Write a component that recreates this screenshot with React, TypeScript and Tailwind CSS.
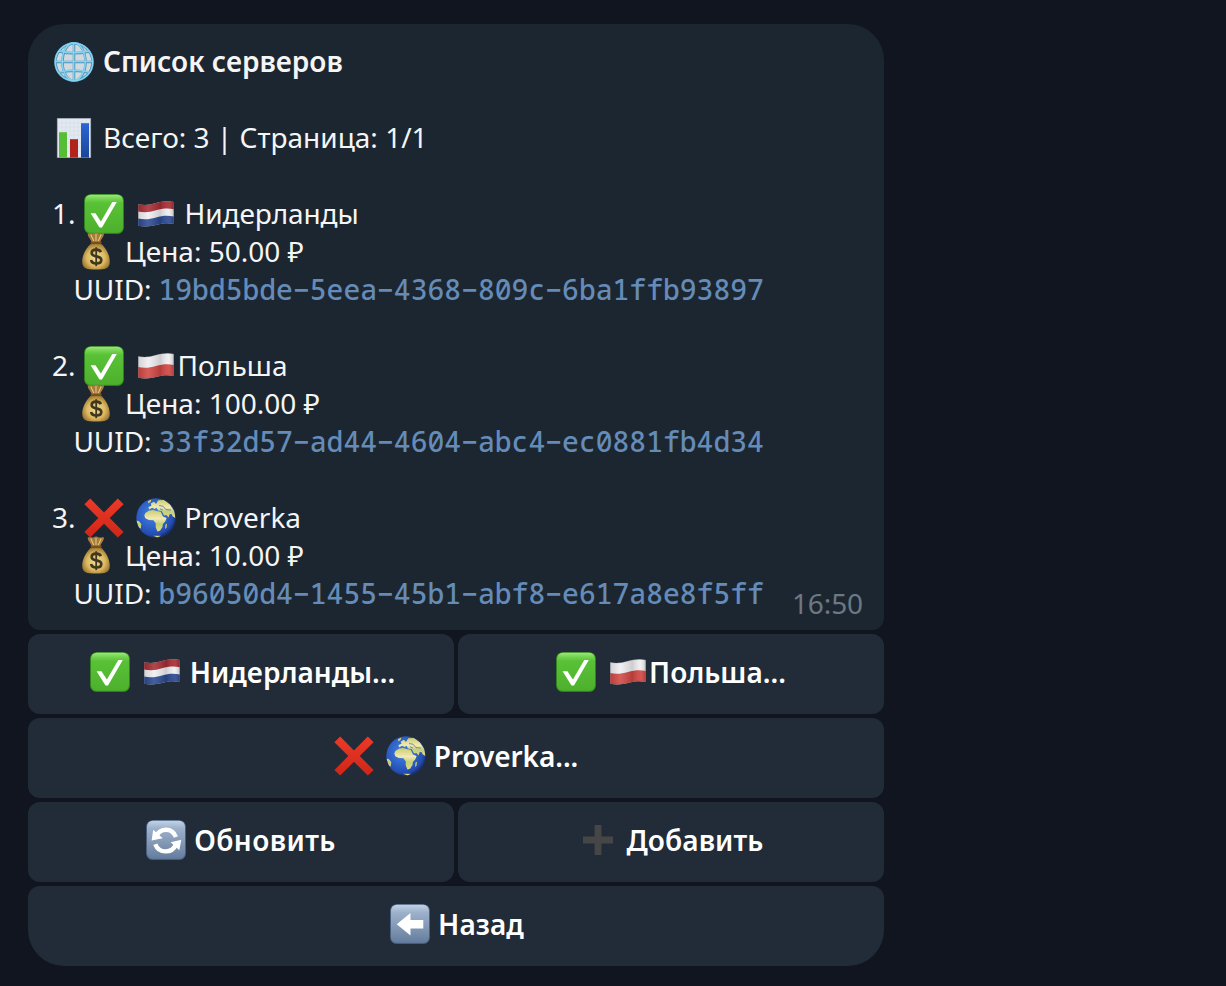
import React, { type ReactNode } from "react";

type IconProps = { className?: string };

function Svg({ className = "", children }: { className?: string; children: ReactNode }) {
  return (
    <svg viewBox="0 0 40 40" className={`h-10 w-10 shrink-0 ${className}`} aria-hidden="true">
      {children}
    </svg>
  );
}

function Gradients() {
  return (
    <svg className="absolute h-0 w-0" aria-hidden="true">
      <defs>
        <linearGradient id="green" x1="0" y1="0" x2="0" y2="1">
          <stop offset="0" stopColor="#a0e57c" />
          <stop offset=".12" stopColor="#6fd14c" />
          <stop offset=".22" stopColor="#58c136" />
          <stop offset="1" stopColor="#4eb02d" />
        </linearGradient>
        <linearGradient id="steel" x1="0" y1="0" x2="0" y2="1">
          <stop offset="0" stopColor="#c3d3e5" />
          <stop offset=".2" stopColor="#9db1cb" />
          <stop offset="1" stopColor="#657d9d" />
        </linearGradient>
        <linearGradient id="cross" x1="0" y1="0" x2="0" y2="1">
          <stop offset="0" stopColor="#ec3a27" />
          <stop offset="1" stopColor="#cf2618" />
        </linearGradient>
        <radialGradient id="ocean" cx=".42" cy=".4" r=".6">
          <stop offset="0" stopColor="#4685dd" />
          <stop offset=".6" stopColor="#2d5fc6" />
          <stop offset=".88" stopColor="#234bae" />
          <stop offset="1" stopColor="#1b3174" />
        </radialGradient>
        <linearGradient id="land" x1="0" y1="0" x2="0" y2="1">
          <stop offset="0" stopColor="#c9cd6c" />
          <stop offset=".4" stopColor="#f2e9b4" />
          <stop offset=".65" stopColor="#c4cf76" />
          <stop offset="1" stopColor="#e3d885" />
        </linearGradient>
        <radialGradient id="bag" cx=".5" cy=".55" r=".6">
          <stop offset="0" stopColor="#f3dc94" />
          <stop offset=".55" stopColor="#dcb961" />
          <stop offset="1" stopColor="#8b6322" />
        </radialGradient>
        <linearGradient id="wave" x1="0" y1="0" x2="1" y2="0">
          <stop offset="0" stopColor="#000" stopOpacity=".12" />
          <stop offset=".28" stopColor="#fff" stopOpacity=".12" />
          <stop offset=".62" stopColor="#000" stopOpacity=".14" />
          <stop offset=".85" stopColor="#fff" stopOpacity=".08" />
          <stop offset="1" stopColor="#000" stopOpacity=".2" />
        </linearGradient>
        <linearGradient id="barBlue" x1="0" y1="0" x2="0" y2="1">
          <stop offset="0" stopColor="#2a66d4" />
          <stop offset="1" stopColor="#1a4499" />
        </linearGradient>
        <clipPath id="globeClip"><circle cx="20" cy="20" r="19.7" /></clipPath>
      </defs>
    </svg>
  );
}

function Globe({ className }: IconProps) {
  return (
    <Svg className={className}>
      <circle cx="20" cy="20" r="19" fill="#d3d8de" />
      <g fill="none" stroke="#4f95b8" strokeWidth="2.5">
        <path d="M20 1v38M1 20h38M5.2 9.5Q20 13.2 34.8 9.5M5.2 30.5Q20 27 34.8 30.5" />
        <ellipse cx="20" cy="20" rx="11.5" ry="19" />
        <circle cx="20" cy="20" r="18.5" />
      </g>
      <g fill="none" stroke="#84d3f1" strokeWidth="1.5">
        <path d="M19.6 1v38M1 19.5h38M5.2 9Q20 12.7 34.8 9M5.2 30Q20 26.5 34.8 30" />
        <ellipse cx="19.7" cy="19.7" rx="11.5" ry="18.8" />
        <circle cx="20" cy="20" r="18.8" />
      </g>
    </Svg>
  );
}

function Chart({ className }: IconProps) {
  return (
    <Svg className={className}>
      <path fill="#e3e9f1" stroke="#aeb7c1" strokeWidth=".8" d="M3.4.4h33.2v39.2H3.4z" />
      <path stroke="#d3dbe5" strokeWidth=".5" d="M4 5h32M4 9h32M4 13h32M4 17h32M4 21h32M4 25h32M4 29h32M4 33h32M8 1v38M12 1v38M16 1v38M20 1v38M24 1v38M28 1v38M32 1v38" />
      <path fill="#56bd37" d="M5 14.2h8v25.4H5z" />
      <path fill="#b1241b" d="M16 21.2h8v18.4h-8z" />
      <path fill="url(#barBlue)" d="M27 5.2h8v34.4h-8z" />
    </Svg>
  );
}

function Check({ className }: IconProps) {
  return (
    <Svg className={className}>
      <rect x=".2" y=".2" width="39.6" height="39.6" rx="6.4" fill="#369a1b" />
      <rect x="1" y=".8" width="38" height="38" rx="5.8" fill="url(#green)" />
      <path fill="#fff" d="M6.6 19.2h4.9l5.4 8.4L28.3 8h4.5L18 33.4h-2.5z" />
    </Svg>
  );
}

function Cross({ className }: IconProps) {
  return (
    <Svg className={className}>
      <path fill="url(#cross)" d="M6.2.6 20 14.5 33.8.6l5.8 5.6L25.7 20.1 39.6 34l-5.8 5.6L20 25.8 6.2 39.6.4 34l13.9-13.9L.4 6.2z" />
    </Svg>
  );
}

const FLAG_SHAPE = "M2.2 10.2C8 11.7 14 10.9 20 9 26 7.2 32 6.5 37.8 7.9V29.9C32 28.5 26 29.1 20 31 14 32.7 8 33 2.2 31.7z";

function Flag({ country, className }: IconProps & { country: "nl" | "pl" }) {
  return (
    <Svg className={className}>
      <path fill="#efeff2" d={FLAG_SHAPE} />
      {country === "nl" ? (
        <>
          <path fill="#a82d35" d="M2.2 10.2C8 11.7 14 10.9 20 9 26 7.2 32 6.5 37.8 7.9V15.3C32 13.9 26 14.5 20 16.3 14 18.2 8 18.8 2.2 17.4z" />
          <path fill="#2c4a92" d="M2.2 24.5C8 26 14 25.3 20 23.5 26 21.7 32 21.2 37.8 22.6V29.9C32 28.5 26 29.1 20 31 14 32.7 8 33 2.2 31.7z" />
        </>
      ) : (
        <path fill="#d14743" d="M2.2 21C8 22.5 14 21.8 20 20 26 18.1 32 17.5 37.8 18.9V29.9C32 28.5 26 29.1 20 31 14 32.7 8 33 2.2 31.7z" />
      )}
      <path fill="url(#wave)" stroke="#34343c" strokeOpacity=".3" strokeWidth=".6" d={FLAG_SHAPE} />
    </Svg>
  );
}

function Earth({ className }: IconProps) {
  return (
    <Svg className={className}>
      <circle cx="20" cy="20" r="19.7" fill="url(#ocean)" />
      <g clipPath="url(#globeClip)" fill="url(#land)">
        <path d="M9.4 15 12.8 12.8 17 12 20.3 13.1 24.7 13.7 27 18.5 30.7 20.1 29.2 23.4 26.9 26.1 26.5 29 24 32.8 21.4 33.4 19.7 29.2 19.7 25.2 17.4 22.2 12.8 22.1 9.3 20.2 8.3 17.6z" />
        <path d="M13 11.4 12.5 9 15.5 7.8 14.7 5.4 18 3.8 20 5.9 22.2 2.3 28 1.9 34 6.5 38.3 13 39.4 20 36.8 18.4 35.4 15.9 33.6 16.2 32.5 19.5 30.4 16.9 28.2 17.5 25.6 13 22 12.6 20.6 9.8 18.6 11 16.2 9.8z" />
        <path d="M.4 22.6 3 23.3 5.3 26 4.8 30.5 2.7 29.4zM29.5 26.5l1.5-.7-.5 4-1.4 1.2zM12 3.2l3.2-1.7-.4 2.2-2.5 1.7zM17 37.7h8l-3.4 1.7z" />
      </g>
      <path d="M23 7.6 27 8.2 30 11.7 35 12M24 10.7l3 1.5" fill="none" stroke="#3d68ab" strokeWidth="1" opacity=".7" />
    </Svg>
  );
}

function MoneyBag({ className }: IconProps) {
  return (
    <Svg className={className}>
      <path fill="#a67b3e" d="M11.8 1.6c2.2-1 4.6.3 6-.4 1.6-.8 3-.9 4.5 0 1.6.8 3.6-.5 5.6.2.6 2.8-3 5.7-3.7 9h-8.6C14.9 7.1 11.2 4.500 11.800 1.600z" />
      <path stroke="#e5c77b" strokeWidth="1.1" fill="none" d="m14.8 2.6 3 6.4m2.2-7v7m5.2-6.4-3 6.4" />
      <path fill="url(#bag)" d="M15.2 11.4h9.7c3.6 2.7 8.9 10.4 8.9 18.3 0 6.600-4.400 7.900-13.800 7.900S6.200 36.300 6.200 29.700c0-7.900 5.400-15.600 9-18.300z" />
      <path stroke="#795522" strokeWidth="1.6" strokeLinecap="round" d="M15.3 10.6h9.6" />
      <path fill="none" stroke="#40371f" strokeWidth="2.7" d="M24.9 20.1c-.7-1.6-2.4-2.4-4.7-2.4-2.7 0-4.5 1.3-4.5 3.3 0 5 9.6 1.7 9.6 7 0 2.2-2.1 3.5-5 3.5-2.8 0-4.8-1.2-5.2-3.4" />
      <path stroke="#40371f" strokeWidth="1.8" d="M20.2 15.2v19" />
    </Svg>
  );
}

function Tile() {
  return (
    <>
      <rect x=".2" y=".2" width="39.6" height="39.6" rx="6.4" fill="#536d91" />
      <rect x="1" y=".8" width="38" height="38" rx="5.8" fill="url(#steel)" />
    </>
  );
}

function Refresh({ className }: IconProps) {
  return (
    <Svg className={className}>
      <Tile />
      <g fill="none" stroke="#fff" strokeWidth="4.4">
        <path d="M10.5 16C14 8 26 7 29.9 17" />
        <path d="M30 24.5C26 33.5 13 34 9.3 24.2" />
      </g>
      <path fill="#fff" d="M7.2 9.8 5.6 20.4 16.7 18.3zM35.3 19.7l-10.6 2.6 8.6 8z" />
    </Svg>
  );
}

function BackArrow({ className }: IconProps) {
  return (
    <Svg className={className}>
      <Tile />
      <path fill="#fff" d="M6.7 20.2 20.5 8.9v7.1h12.8v8.4H20.5v7.1z" />
    </Svg>
  );
}

function Plus({ className }: IconProps) {
  return (
    <Svg className={className}>
      <path fill="#464646" d="M16.6 5h6.8v11.6H35v6.8H23.4V35h-6.8V23.4H5v-6.8h11.6z" />
    </Svg>
  );
}

function Line({ className = "", children }: { className?: string; children?: ReactNode }) {
  return <div className={`flex h-[38px] items-center whitespace-pre ${className}`}>{children}</div>;
}

function Label({ className = "", children }: { className?: string; children: ReactNode }) {
  return <span className={`pb-0.5 ${className}`}>{children}</span>;
}

function Uuid({ value }: { value: string }) {
  return (
    <Label className="ml-[7px] font-['Noto_Sans_Mono','DejaVu_Sans_Mono',monospace] font-medium tracking-[0.02px] text-[#658cb8]">
      {value.replaceAll("-", "−")}
    </Label>
  );
}

type Server = { name: string; price: string; uuid: string; icon: ReactNode; active: boolean; gap: string };

const servers: Server[] = [
  { name: "Нидерланды", price: "50.00", uuid: "19bd5bde-5eea-4368-809c-6ba1ffb93897", icon: <Flag country="nl" />, active: true, gap: "ml-[8.5px] tracking-[-0.1px]" },
  { name: "Польша", price: "100.00", uuid: "33f32d57-ad44-4604-abc4-ec0881fb4d34", icon: <Flag country="pl" />, active: true, gap: "ml-[1.5px] tracking-[0.1px]" },
  { name: "Proverka", price: "10.00", uuid: "b96050d4-1455-45b1-abf8-e617a8e8f5ff", icon: <Earth />, active: false, gap: "ml-[8.5px]" },
];

function ServerEntry({ server, index }: { server: Server; index: number }) {
  return (
    <div>
      <Line>
        <Label className="w-8">{index + 1}.</Label>
        {server.active ? <Check /> : <Cross />}
        <span className="ml-3 flex">{server.icon}</span>
        <Label className={server.gap}>{server.name}</Label>
      </Line>
      <Line className="pl-6">
        <MoneyBag />
        <Label className="ml-[9px]">Цена: {server.price} ₽</Label>
      </Line>
      <Line className="pl-[21.5px]">
        <Label className="tracking-[-0.1px]">UUID:</Label>
        <Uuid value={server.uuid} />
      </Line>
    </div>
  );
}

function KeyboardButton({ className = "", children }: { className?: string; children: ReactNode }) {
  return (
    <button className={`flex h-20 items-center justify-center whitespace-pre rounded-xl bg-[#212c38] pb-1 font-semibold text-white ${className}`}>
      {children}
    </button>
  );
}

export default function App() {
  return (
    <main className="min-h-screen bg-[#10151f] pl-7 pt-6 font-['Noto_Sans','Open_Sans',sans-serif] text-[28px] font-normal leading-[38px] text-[#f5f5f5]">
      <Gradients />
      <div className="flex w-[856px] flex-col gap-1">
        <section className="flex h-[606px] items-end justify-between rounded-b-xl rounded-t-[36px] bg-[#1c2631] pb-[17px] pl-6 pr-[21px]">
          <div>
            <Line className="font-semibold">
              <Globe className="ml-0.5" />
              <Label className="ml-[9px]">Список серверов</Label>
            </Line>
            <Line />
            <Line>
              <Chart className="ml-0.5" />
              <Label className="ml-[9px]">Всего: 3 | Страница: 1/1</Label>
            </Line>
            <div className="mt-[38px] flex flex-col gap-[38px]">
              {servers.map((server, i) => (
                <ServerEntry key={server.uuid} server={server} index={i} />
              ))}
            </div>
          </div>
          <time className="-mb-[9px] tracking-[-0.1px] text-[#6d7883]">16:50</time>
        </section>
        <div className="grid grid-cols-2 gap-1">
          <KeyboardButton className="pl-[3px]">
            <Check />
            <Flag country="nl" className="ml-3" />
            <span className="ml-2 pb-px">Нидерланды...</span>
          </KeyboardButton>
          <KeyboardButton>
            <Check />
            <Flag country="pl" className="ml-3" />
            <span className="ml-px pb-px">Польша...</span>
          </KeyboardButton>
          <KeyboardButton className="col-span-2">
            <Cross />
            <Earth className="ml-3" />
            <span className="ml-2 pb-px tracking-[-0.1px]">Proverka...</span>
          </KeyboardButton>
          <KeyboardButton>
            <Refresh />
            <span className="ml-2 pb-px tracking-[0.4px]">Обновить</span>
          </KeyboardButton>
          <KeyboardButton>
            <Plus />
            <span className="ml-2 pb-px tracking-[0.1px]">Добавить</span>
          </KeyboardButton>
          <KeyboardButton className="col-span-2 rounded-b-[36px] pl-0.5">
            <BackArrow />
            <span className="ml-2 pb-px tracking-[0.1px]">Назад</span>
          </KeyboardButton>
        </div>
      </div>
    </main>
  );
}
